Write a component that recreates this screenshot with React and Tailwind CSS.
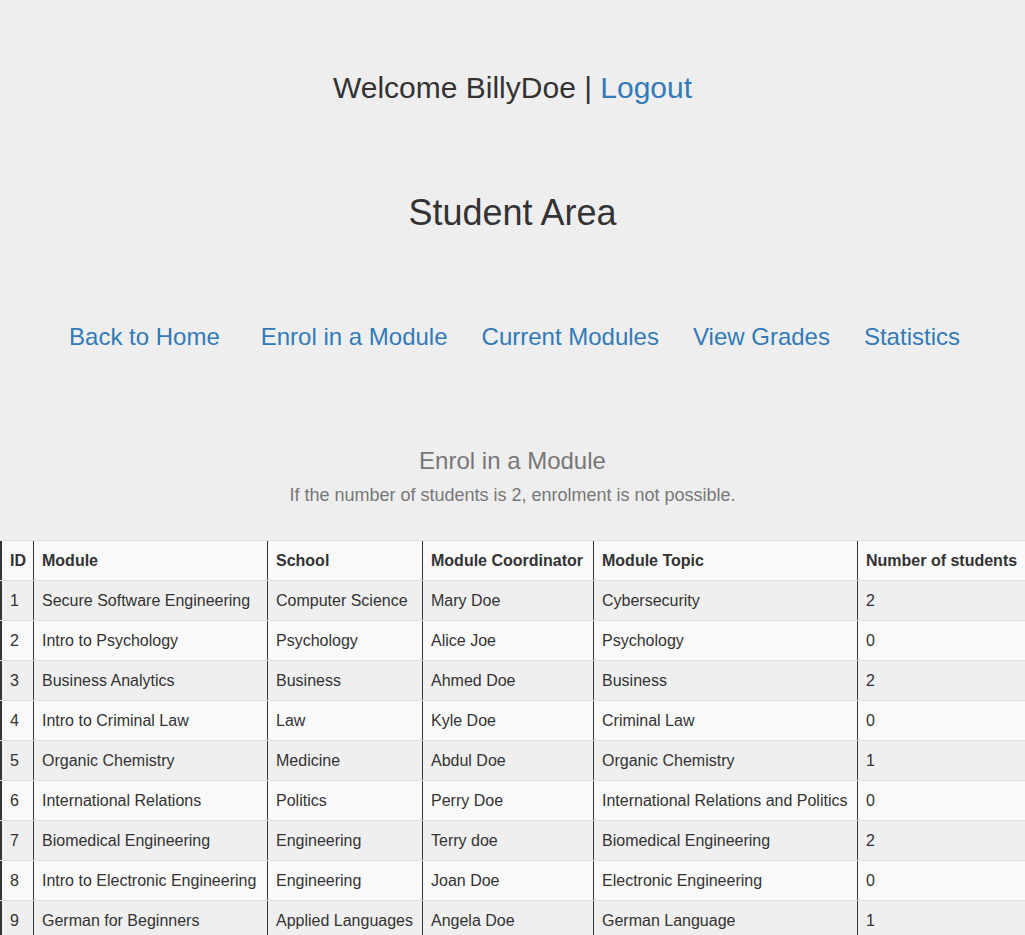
import React from 'react';

const modules = [
  { id: 1, name: 'Secure Software Engineering', school: 'Computer Science', coordinator: 'Mary Doe', topic: 'Cybersecurity', students: 2 },
  { id: 2, name: 'Intro to Psychology', school: 'Psychology', coordinator: 'Alice Joe', topic: 'Psychology', students: 0 },
  { id: 3, name: 'Business Analytics', school: 'Business', coordinator: 'Ahmed Doe', topic: 'Business', students: 2 },
  { id: 4, name: 'Intro to Criminal Law', school: 'Law', coordinator: 'Kyle Doe', topic: 'Criminal Law', students: 0 },
  { id: 5, name: 'Organic Chemistry', school: 'Medicine', coordinator: 'Abdul Doe', topic: 'Organic Chemistry', students: 1 },
  { id: 6, name: 'International Relations', school: 'Politics', coordinator: 'Perry Doe', topic: 'International Relations and Politics', students: 0 },
  { id: 7, name: 'Biomedical Engineering', school: 'Engineering', coordinator: 'Terry doe', topic: 'Biomedical Engineering', students: 2 },
  { id: 8, name: 'Intro to Electronic Engineering', school: 'Engineering', coordinator: 'Joan Doe', topic: 'Electronic Engineering', students: 0 },
  { id: 9, name: 'German for Beginners', school: 'Applied Languages', coordinator: 'Angela Doe', topic: 'German Language', students: 1 },
];

const navLinks = ['Back to Home', 'Enrol in a Module', 'Current Modules', 'View Grades', 'Statistics'];

const rowGrid = 'grid grid-cols-[33px_234px_155px_171px_264px_1fr] h-[40px] border-t border-[#dddddd]';
const cell = 'flex items-center px-2 border-l border-[#333333] whitespace-nowrap overflow-hidden';
const firstCell = 'flex items-center px-2 border-l-2 border-[#333333] whitespace-nowrap';

function Row({ values, bold, bg }) {
  return (
    <div className={`${rowGrid} ${bg} ${bold ? 'font-bold' : ''}`}>
      {values.map((v, i) => (
        <div key={i} className={i === 0 ? firstCell : cell}>
          {v}
        </div>
      ))}
    </div>
  );
}

export default function App() {
  return (
    <div className="min-h-screen bg-[#eeeeee] text-[#333333] font-['Liberation_Sans',Arial,sans-serif] overflow-hidden">
      <div className="pt-[70px] text-center text-[30px] leading-[36px]">
        Welcome BillyDoe | <a href="#" className="text-[#337ab7]">Logout</a>
      </div>

      <h1 className="mt-[87px] text-center text-[36px] leading-[40px]">Student Area</h1>

      <nav className="mt-[89px] pl-[4px] flex justify-center gap-[34px] text-[24px] leading-[30px] text-[#337ab7]">
        {navLinks.map((link, i) => (
          <a key={link} href="#" className={i === 0 ? 'mr-[7px]' : ''}>
            {link}
          </a>
        ))}
      </nav>

      <h3 className="mt-[95px] text-center text-[24px] leading-[28px] text-[#777777]">Enrol in a Module</h3>
      <p className="mt-[9px] text-center text-[18px] leading-[22px] text-[#777777]">
        If the number of students is 2, enrolment is not possible.
      </p>

      <div className="mt-[34px] text-[16px] leading-[20px] w-[1025px]">
        <Row
          bold
          bg="bg-[#f9f9f9]"
          values={['ID', 'Module', 'School', 'Module Coordinator', 'Module Topic', 'Number of students']}
        />
        {modules.map((m, i) => (
          <Row
            key={m.id}
            bg={i % 2 === 0 ? 'bg-[#efefef]' : 'bg-[#f9f9f9]'}
            values={[m.id, m.name, m.school, m.coordinator, m.topic, m.students]}
          />
        ))}
      </div>
    </div>
  );
}
